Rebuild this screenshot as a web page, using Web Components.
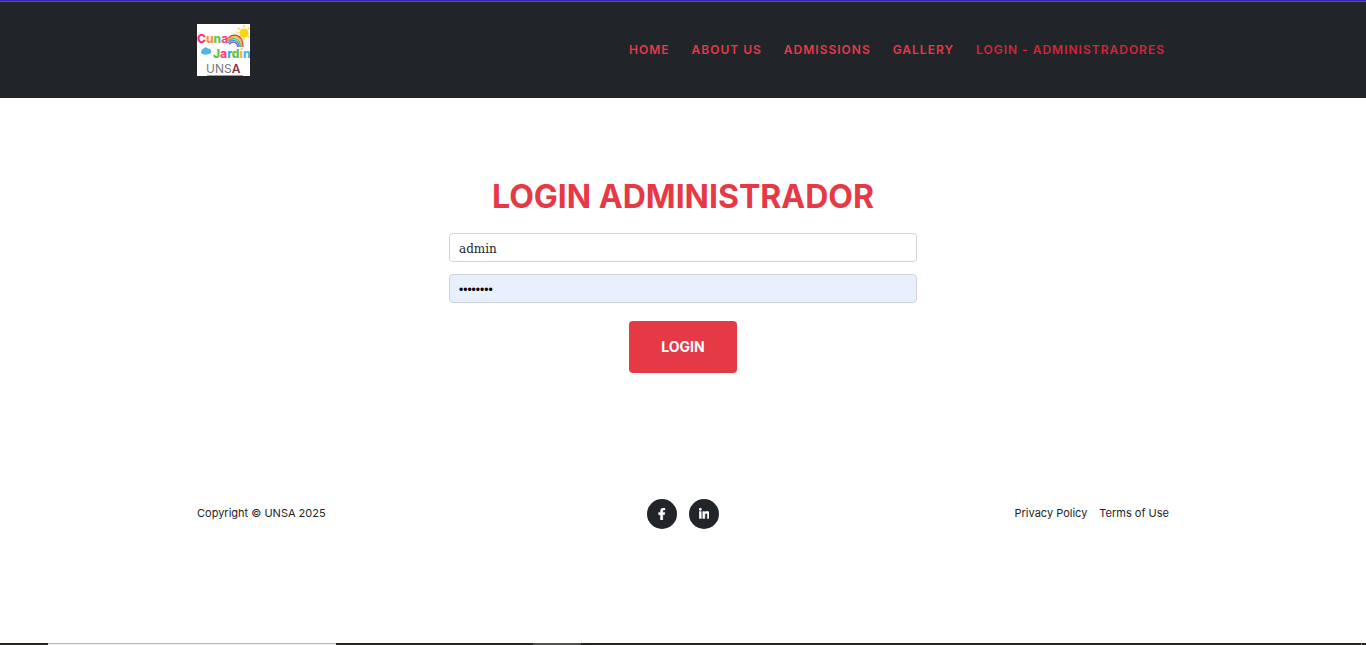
<!DOCTYPE html>
<html lang="es">
<head>
<meta charset="utf-8">
<meta name="viewport" content="width=device-width, initial-scale=1">
<title>Login Administrador</title>
<style>
html, body { margin: 0; }
body { font-family: Inter, "Open Sans", sans-serif; color: #212529; background: #fff; }
</style>
</head>
<body>
<login-page></login-page>
<script>
function define(name, html) {
  const template = document.createElement('template');
  template.innerHTML = html;
  customElements.define(name, class extends HTMLElement {
    constructor() {
      super();
      this.attachShadow({ mode: 'open' }).append(template.content.cloneNode(true));
    }
  });
}

define('school-logo', `
<style>
:host { display: block; width: 53px; height: 52px; }
svg { display: block; width: 100%; height: 100%; }
text { font-family: Inter, sans-serif; font-weight: 800; }
</style>
<svg viewBox="0 0 53 52" role="img" aria-label="Cuna Jardín UNSA">
  <rect width="53" height="52" fill="#fff"/>
  <g stroke="#f9d71c" stroke-width="1.2" stroke-linecap="round">
    <path d="M47 1v2M41 4l2 1.5M40 9h2M42 13l1.500-1M47 15v-2M52 13l-1-1M52 4l-1 1"/>
  </g>
  <circle cx="47" cy="9" r="4.600" fill="#fcd411"/>
  <g fill="none" stroke-width="1.400">
    <path d="M31 15c3-6 15-6 15 8" stroke="#ee3b4b"/>
    <path d="M31 16.300c4-5.500 13.700-5 13.700 6.700" stroke="#f9b233"/>
    <path d="M31 17.600c4-5 12.400-4 12.400 5.400" stroke="#62c152"/>
    <path d="M31 18.900c4-4.500 11.100-3 11.100 4.100" stroke="#3c9fe0"/>
    <path d="M32 20.200c4-4 8.800-2 8.800 2.800" stroke="#8c61bd"/>
  </g>
  <path d="M5 30a3 3 0 0 1 1-5 3.200 3.200 0 0 1 5-.5 3 3 0 0 1 2.500 5Q9 31.500 5 30z" fill="#51b4ec"/>
  <text x="0" y="19" font-size="12" fill="#ff2e78">C<tspan fill="#ff8d3c">u</tspan><tspan fill="#60c84e">n</tspan><tspan fill="#ff3e83">a</tspan></text>
  <text x="16" y="34" font-size="12" fill="#62bf45">J<tspan fill="#ff3e83">a</tspan><tspan fill="#3da8e8">r</tspan><tspan fill="#62bf45">d</tspan><tspan fill="#ffb21c">í</tspan><tspan fill="#3db5e8">n</tspan></text>
  <text x="9" y="49" font-size="12" style="font-weight:400" fill="#777">UNS<tspan fill="#8b3555" font-weight="600">A</tspan></text>
  <path d="M10 51.500h36" stroke="#a56c83" stroke-width=".8"/>
</svg>`);

define('nav-link', `
<style>
:host { display: block; }
a { display: block; padding: 12px 11px; font-size: 12px; line-height: 18px; font-weight: 600; letter-spacing: 1px;
    color: #e63946; text-decoration: none; text-transform: uppercase; white-space: nowrap; }
:host([active]) a { color: #d22637; }
</style>
<a href="#"><slot></slot></a>`);

define('site-header', `
<style>
:host { display: block; background: #212529; border-top: 1px solid #3425b4; }
.edge { height: 1px; background: #564bb9; }
.bar { box-sizing: border-box; width: 100%; max-width: 972px; margin: 0 auto; padding: 22px 0;
       display: flex; align-items: center; justify-content: space-between; }
nav { display: flex; margin-right: -7px; }
</style>
<div class="edge"></div>
<div class="bar">
  <school-logo></school-logo>
  <nav>
    <nav-link>Home</nav-link>
    <nav-link>About us</nav-link>
    <nav-link>Admissions</nav-link>
    <nav-link>Gallery</nav-link>
    <nav-link active>Login - Administradores</nav-link>
  </nav>
</div>`);

define('login-form', `
<style>
:host { display: block; padding: 72px 0 108px; }
form { max-width: 468px; margin: 0 auto; display: flex; flex-direction: column; align-items: center; }
h2 { margin: 0 0 10px; font-size: 32px; line-height: 53px; font-weight: 700; color: #e63946; text-transform: uppercase; white-space: nowrap; }
input { box-sizing: border-box; width: 100%; height: 29px; margin: 0 0 12px; padding: 5px 9px 3px;
        border: 1px solid #ced4da; border-radius: 4px; background: #fff; color: #212529;
        font: 12px/20px "DejaVu Serif", serif; }
input[type=password] { background: #e8f0fe; color: #000; font-family: "Liberation Sans", sans-serif; }
button { margin: 6px 0 0; width: 108px; height: 52px; border: 0; border-radius: 4px; background: #e63946; color: #fff;
         font: 700 14px/20px Inter, sans-serif; text-transform: uppercase; }
</style>
<form>
  <h2>Login Administrador</h2>
  <input type="text" aria-label="Usuario" value="admin">
  <input type="password" aria-label="Contraseña" value="admin123">
  <button type="button">Login</button>
</form>`);

define('social-link', `
<style>
:host { display: block; }
a { display: flex; align-items: center; justify-content: center; width: 30px; height: 30px; border-radius: 50%; background: #212529; color: #fff; }
</style>
<a href="#"><slot></slot></a>`);

define('site-footer', `
<style>
:host { display: block; font-size: 11px; line-height: 18px; }
.row { max-width: 972px; margin: 0 auto; padding: 18px 0; display: grid; grid-template-columns: 1fr auto 1fr; align-items: center; }
.copyright, .legal { padding-bottom: 2px; }
.social, .legal { display: flex; gap: 12px; }
.legal { justify-content: flex-end; }
.legal a { color: #212529; text-decoration: none; }
svg { display: block; height: 12px; fill: currentColor; stroke: currentColor; stroke-width: 16; }
</style>
<div class="row">
  <div class="copyright">Copyright © UNSA 2025</div>
  <div class="social">
    <social-link><svg viewBox="0 0 320 512" role="img" aria-label="Facebook"><path d="M279.140 288l14.220-92.660h-88.910v-60.130c0-25.350 12.420-50.060 52.240-50.060h40.420V6.260S260.430 0 225.360 0c-73.220 0-121.080 44.380-121.080 124.720v70.620H22.890V288h81.390v224h100.170V288z"/></svg></social-link>
    <social-link><svg viewBox="0 0 448 512" role="img" aria-label="LinkedIn"><path d="M100.280 448H7.400V148.900h92.880zM53.790 108.100C24.090 108.100 0 83.500 0 53.800a53.790 53.790 0 0 1 107.580 0c0 29.700-24.100 54.300-53.790 54.300zM447.900 448h-92.680V302.400c0-34.700-.7-79.200-48.290-79.200-48.290 0-55.690 37.700-55.690 76.700V448h-92.780V148.900h89.080v40.800h1.300c12.400-23.500 42.690-48.300 87.880-48.300 94 0 111.280 61.900 111.280 142.300V448z"/></svg></social-link>
  </div>
  <div class="legal"><a href="#">Privacy Policy</a><a href="#">Terms of Use</a></div>
</div>`);

define('task-strip', `
<style>
:host { display: flex; height: 2px; background: #24241b; }
.gap { width: 48px; }
.window { box-sizing: border-box; width: 288px; background: #ececec; border-top: 1px solid #b9b9b9; }
.space { width: 197px; }
.tab { width: 48px; background: #51524a; }
.end { width: 1px; margin: 0 4px 0 auto; background: #85857f; }
</style>
<div class="gap"></div><div class="window"></div><div class="space"></div><div class="tab"></div><div class="end"></div>`);

define('login-page', `
<style>
:host { display: flex; flex-direction: column; min-height: 100vh; }
task-strip { margin-top: auto; }
</style>
<site-header></site-header>
<main><login-form></login-form></main>
<site-footer></site-footer>
<task-strip></task-strip>`);
</script>
</body>
</html>
